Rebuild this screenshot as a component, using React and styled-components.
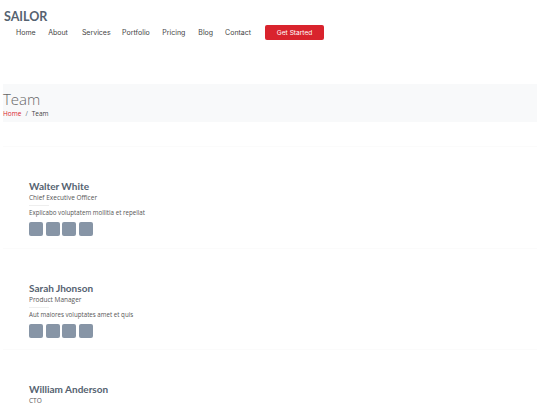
import React from 'react';
import styled, { createGlobalStyle } from 'styled-components';

const GlobalStyle = createGlobalStyle`
    html, body {
        margin: 0;
        padding: 0;
        background: #fff;
        font-family: "Open Sans", "Liberation Sans", sans-serif;
        color: #444;
    }
`;

const Header = styled.header`
    padding: 9px 4px 0 4px;
`;

const Logo = styled.div`
    font-family: "Lato", "Open Sans", sans-serif;
    font-weight: 700;
    font-size: 12.5px;
    line-height: 16px;
    color: #556270;
`;

const Nav = styled.nav`
    display: flex;
    align-items: center;
    height: 15px;
    padding-left: 12px;
`;

const NavLink = styled.a`
    font-family: "Inter", "Open Sans", sans-serif;
    font-size: 7px;
    color: #444;
    text-decoration: none;
    margin-right: ${p => p.gap || 13}px;
`;

const CtaButton = styled.a`
    display: flex;
    align-items: center;
    justify-content: center;
    width: 59px;
    height: 15px;
    background: #d9232d;
    color: #fff;
    border-radius: 2px;
    font-family: "Inter", "Open Sans", sans-serif;
    font-size: 6.6px;
    text-decoration: none;
`;

const Main = styled.main`
    padding: 0 3px;
`;

const Breadcrumbs = styled.section`
    margin-top: 44px;
    background: #f8f9fa;
    height: 38px;
    padding-top: 6px;
    box-sizing: border-box;
`;

const PageTitle = styled.h2`
    margin: 0;
    font-family: "Open Sans", sans-serif;
    font-weight: 300;
    font-size: 15px;
    line-height: 19px;
    color: #666;
`;

const Crumbs = styled.ol`
    display: flex;
    list-style: none;
    margin: 0;
    padding: 0;
    font-size: 6.5px;
    line-height: 10px;
    color: #444;
`;

const Crumb = styled.li`
    color: ${p => (p.active ? '#d9232d' : '#444')};
    &:not(:first-child)::before {
        content: "/";
        color: #6c757d;
        padding: 0 4px;
    }
`;

const TeamList = styled.section`
    margin-top: 24px;
`;

const Card = styled.div`
    height: 101.5px;
    box-sizing: border-box;
    border-top: 1px solid #fbfbfb;
    padding: 33px 0 0 26px;
`;

const Name = styled.h4`
    margin: 0;
    font-family: "Lato", "Open Sans", sans-serif;
    font-weight: 700;
    font-size: 10px;
    line-height: 12px;
    color: #556270;
`;

const Role = styled.span`
    display: block;
    margin-top: 1px;
    font-size: 6.5px;
    line-height: 10px;
    color: #555;
    &::after {
        content: "";
        display: block;
        width: 20px;
        height: 1px;
        background: #eee;
        margin-top: 2px;
    }
`;

const Desc = styled.p`
    margin: 2px 0 0 0;
    font-size: 6.2px;
    line-height: 10px;
    color: #555;
`;

const Social = styled.div`
    display: flex;
    gap: 2.7px;
    margin-top: 4px;
`;

const SocialIcon = styled.a`
    display: block;
    width: 14px;
    height: 14px;
    border-radius: 2px;
    background: #8795a6;
`;

const members = [
    { name: 'Walter White', role: 'Chief Executive Officer', desc: 'Explicabo voluptatem mollitia et repellat' },
    { name: 'Sarah Jhonson', role: 'Product Manager', desc: 'Aut maiores voluptates amet et quis' },
    { name: 'William Anderson', role: 'CTO', desc: 'Quisquam facilis cum velit laborum corrupti' },
];

const navItems = [
    ['Home', 12.5], ['About', 14], ['Services', 11.5], ['Portfolio', 12.5],
    ['Pricing', 13], ['Blog', 12], ['Contact', 14],
];

const App = () => {
    return (
        <React.Fragment>
            <GlobalStyle />
            <Header>
                <Logo>SAILOR</Logo>
                <Nav>
                    {navItems.map(([label, gap]) => (
                        <NavLink key={label} gap={gap}>{label}</NavLink>
                    ))}
                    <CtaButton>Get Started</CtaButton>
                </Nav>
            </Header>
            <Main>
                <Breadcrumbs>
                    <PageTitle>Team</PageTitle>
                    <Crumbs>
                        <Crumb active>Home</Crumb>
                        <Crumb>Team</Crumb>
                    </Crumbs>
                </Breadcrumbs>
                <TeamList>
                    {members.map((m) => (
                        <Card key={m.name}>
                            <Name>{m.name}</Name>
                            <Role>{m.role}</Role>
                            <Desc>{m.desc}</Desc>
                            <Social>
                                <SocialIcon />
                                <SocialIcon />
                                <SocialIcon />
                                <SocialIcon />
                            </Social>
                        </Card>
                    ))}
                </TeamList>
            </Main>
        </React.Fragment>
    );
};

export default App;
